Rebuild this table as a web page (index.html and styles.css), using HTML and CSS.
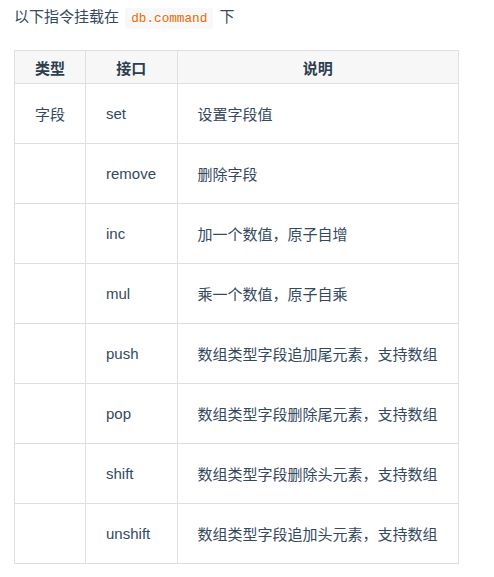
FILE: index.html
```html
<!DOCTYPE html>
<html>
<head>
<meta charset="utf-8">
<link rel="stylesheet" href="styles.css">
</head>
<body>
<p class="intro">以下指令挂载在 <code class="code">db.command</code> 下</p>
<table class="api">
  <colgroup>
    <col class="c1"><col class="c2"><col class="c3">
  </colgroup>
  <thead>
    <tr><th>类型</th><th>接口</th><th>说明</th></tr>
  </thead>
  <tbody>
    <tr><td>字段</td><td>set</td><td>设置字段值</td></tr>
    <tr><td></td><td>remove</td><td>删除字段</td></tr>
    <tr><td></td><td>inc</td><td>加一个数值，原子自增</td></tr>
    <tr><td></td><td>mul</td><td>乘一个数值，原子自乘</td></tr>
    <tr><td></td><td>push</td><td>数组类型字段追加尾元素，支持数组</td></tr>
    <tr><td></td><td>pop</td><td>数组类型字段删除尾元素，支持数组</td></tr>
    <tr><td></td><td>shift</td><td>数组类型字段删除头元素，支持数组</td></tr>
    <tr><td></td><td>unshift</td><td>数组类型字段追加头元素，支持数组</td></tr>
  </tbody>
</table>
</body>
</html>
```

FILE: styles.css
```css
html, body {
  margin: 0;
  padding: 0;
  background: #fff;
}
body {
  padding: 0 14px;
  font-family: "Liberation Sans", "Noto Sans CJK SC", sans-serif;
  font-size: 15px;
  color: #34495e;
}
.intro {
  margin: 4px 0 20px;
  line-height: 26px;
  height: 26px;
}
.code {
  font-family: "Liberation Mono", monospace;
  font-size: 12.7px;
  color: #e96900;
  background: #f8f8f8;
  padding: 3px 6px;
  border-radius: 3px;
  margin: 0 2px;
}
.api {
  border-collapse: collapse;
  width: 445px;
}
.c1 { width: 71px; }
.c2 { width: 92px; }
.c3 { width: 282px; }
.api th, .api td {
  border: 1px solid #dfdfdf;
  padding: 0 20px;
  white-space: nowrap;
}
.api th {
  background: #f7f7f7;
  height: 32px;
  font-weight: bold;
  color: #2c3e50;
  text-align: center;
}
.api td {
  height: 59px;
  text-align: left;
}
```
